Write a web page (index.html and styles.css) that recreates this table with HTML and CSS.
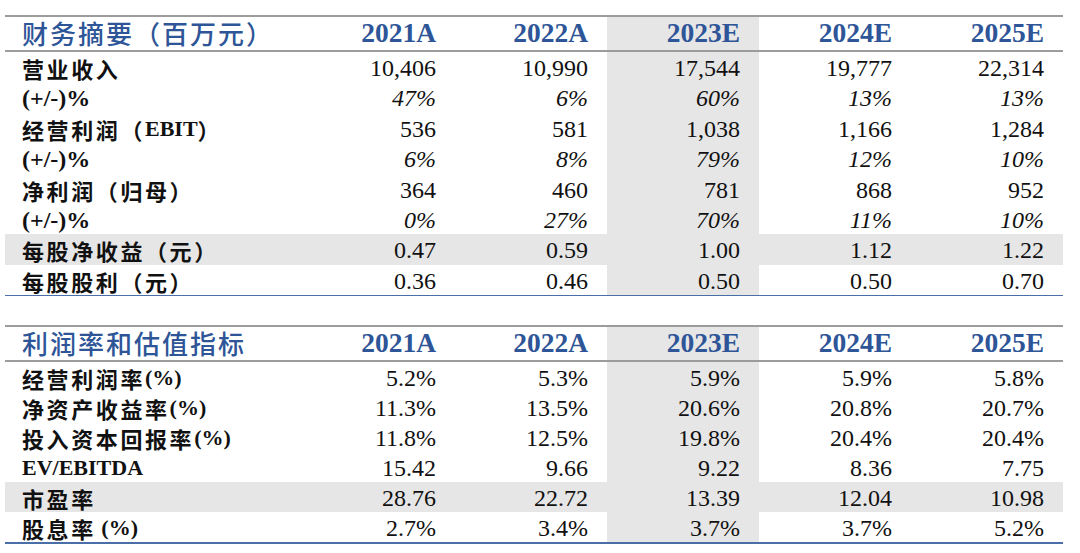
FILE: index.html
```html
<!DOCTYPE html>
<html lang="zh-CN">
<head>
<meta charset="utf-8">
<title>财务摘要</title>
<link rel="stylesheet" href="styles.css">
</head>
<body>
<div class="page">
  <div class="tbl t1">
    <div class="row head">
      <div class="c lab"><span class="cn hcn">财务摘要（百万元）</span></div>
      <div class="c">2021A</div><div class="c">2022A</div><div class="c">2023E</div><div class="c">2024E</div><div class="c">2025E</div>
    </div>
    <div class="row">
      <div class="c lab"><span class="cn">营业收入</span></div>
      <div class="c">10,406</div><div class="c">10,990</div><div class="c">17,544</div><div class="c">19,777</div><div class="c">22,314</div>
    </div>
    <div class="row it">
      <div class="c lab gr">(+/-)%</div>
      <div class="c">47%</div><div class="c">6%</div><div class="c">60%</div><div class="c">13%</div><div class="c">13%</div>
    </div>
    <div class="row">
      <div class="c lab"><span class="cn">经营利润（</span>EBIT<span class="cn">）</span></div>
      <div class="c">536</div><div class="c">581</div><div class="c">1,038</div><div class="c">1,166</div><div class="c">1,284</div>
    </div>
    <div class="row it">
      <div class="c lab gr">(+/-)%</div>
      <div class="c">6%</div><div class="c">8%</div><div class="c">79%</div><div class="c">12%</div><div class="c">10%</div>
    </div>
    <div class="row">
      <div class="c lab"><span class="cn">净利润（归母）</span></div>
      <div class="c">364</div><div class="c">460</div><div class="c">781</div><div class="c">868</div><div class="c">952</div>
    </div>
    <div class="row it">
      <div class="c lab gr">(+/-)%</div>
      <div class="c">0%</div><div class="c">27%</div><div class="c">70%</div><div class="c">11%</div><div class="c">10%</div>
    </div>
    <div class="row hl">
      <div class="c lab"><span class="cn">每股净收益（元）</span></div>
      <div class="c">0.47</div><div class="c">0.59</div><div class="c">1.00</div><div class="c">1.12</div><div class="c">1.22</div>
    </div>
    <div class="row">
      <div class="c lab"><span class="cn">每股股利（元）</span></div>
      <div class="c">0.36</div><div class="c">0.46</div><div class="c">0.50</div><div class="c">0.50</div><div class="c">0.70</div>
    </div>
  </div>

  <div class="tbl t2">
    <div class="row head">
      <div class="c lab"><span class="cn hcn">利润率和估值指标</span></div>
      <div class="c">2021A</div><div class="c">2022A</div><div class="c">2023E</div><div class="c">2024E</div><div class="c">2025E</div>
    </div>
    <div class="row">
      <div class="c lab"><span class="cn">经营利润率</span>(%)</div>
      <div class="c">5.2%</div><div class="c">5.3%</div><div class="c">5.9%</div><div class="c">5.9%</div><div class="c">5.8%</div>
    </div>
    <div class="row">
      <div class="c lab"><span class="cn">净资产收益率</span>(%)</div>
      <div class="c">11.3%</div><div class="c">13.5%</div><div class="c">20.6%</div><div class="c">20.8%</div><div class="c">20.7%</div>
    </div>
    <div class="row">
      <div class="c lab"><span class="cn">投入资本回报率</span>(%)</div>
      <div class="c">11.8%</div><div class="c">12.5%</div><div class="c">19.8%</div><div class="c">20.4%</div><div class="c">20.4%</div>
    </div>
    <div class="row">
      <div class="c lab">EV/EBITDA</div>
      <div class="c">15.42</div><div class="c">9.66</div><div class="c">9.22</div><div class="c">8.36</div><div class="c">7.75</div>
    </div>
    <div class="row hl">
      <div class="c lab"><span class="cn">市盈率</span></div>
      <div class="c">28.76</div><div class="c">22.72</div><div class="c">13.39</div><div class="c">12.04</div><div class="c">10.98</div>
    </div>
    <div class="row">
      <div class="c lab"><span class="cn">股息率</span>&nbsp;(%)</div>
      <div class="c">2.7%</div><div class="c">3.4%</div><div class="c">3.7%</div><div class="c">3.7%</div><div class="c">5.2%</div>
    </div>
  </div>
</div>
</body>
</html>
```

FILE: styles.css
```css
html, body {
  margin: 0;
  padding: 0;
  background: #ffffff;
}

.page {
  padding: 15px 17px 0 5px;
  width: 1058px;
  font-family: "Liberation Serif", "Noto Sans CJK SC", serif;
  color: #111111;
}

.tbl {
  display: flex;
  flex-direction: column;
  border-top: 2px solid #9c9c9c;
}

.t1 {
  border-bottom: 1.5px solid #4a6ea8;
}

.t2 {
  margin-top: 28.5px;
  border-bottom: 2px solid #4a6ea8;
}

.row {
  display: flex;
  height: 30.4px;
}

.t2 .row {
  height: 30.1px;
}

.row.head,
.t2 .row.head {
  height: 33px;
  border-bottom: 2px solid #9c9c9c;
}

.c {
  width: 152px;
  box-sizing: border-box;
  height: 100%;
  padding: 2px 19px 0 0;
  text-align: right;
  font-size: 24px;
  line-height: 28px;
  white-space: nowrap;
}

.row.head .c {
  line-height: 30px;
  padding-top: 1px;
}

.c:nth-child(4) {
  background: #e6e6e6;
}

.c.lab {
  width: 298px;
  text-align: left;
  padding: 2px 0 0 17px;
  font-weight: bold;
  font-size: 22px;
}

.c.lab.gr {
  font-size: 24px;
}

.cn {
  font-family: "Noto Sans CJK SC", sans-serif;
  font-weight: bold;
  letter-spacing: 2.6px;
  vertical-align: top;
}

.row.hl {
  background: #e6e6e6;
}

.row.it .c:not(.lab) {
  font-style: italic;
}

.row.head .c {
  color: #2e5597;
  font-weight: bold;
  font-size: 27.5px;
}

.row.head .c.lab {
  font-size: 26px;
}

.row.head .hcn {
  letter-spacing: 2px;
  font-weight: 500;
}
```
